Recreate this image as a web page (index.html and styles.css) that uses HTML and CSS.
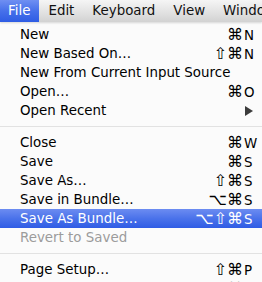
FILE: index.html
```html
<!DOCTYPE html>
<html lang="en">
<head>
    <meta charset="UTF-8">
    <title>File Menu</title>
    <link rel="stylesheet" href="styles.css">
</head>
<body>
    <div class="menubar">
        <span class="title active first">File</span>
        <span class="title">Edit</span>
        <span class="title">Keyboard</span>
        <span class="title">View</span>
        <span class="title">Window</span>
    </div>

    <ul class="menu">
        <li class="item"><span class="label">New</span><span class="keys"><span class="mods">⌘</span><span class="key">N</span></span></li>
        <li class="item"><span class="label">New Based On…</span><span class="keys"><span class="mods">⇧⌘</span><span class="key">N</span></span></li>
        <li class="item"><span class="label">New From Current Input Source</span></li>
        <li class="item"><span class="label">Open…</span><span class="keys"><span class="mods">⌘</span><span class="key">O</span></span></li>
        <li class="item"><span class="label">Open Recent</span><span class="submenu"></span></li>
        <li class="separator"></li>
        <li class="item"><span class="label">Close</span><span class="keys"><span class="mods">⌘</span><span class="key">W</span></span></li>
        <li class="item"><span class="label">Save</span><span class="keys"><span class="mods">⌘</span><span class="key">S</span></span></li>
        <li class="item"><span class="label">Save As…</span><span class="keys"><span class="mods">⇧⌘</span><span class="key">S</span></span></li>
        <li class="item"><span class="label">Save in Bundle…</span><span class="keys"><span class="mods">⌥⌘</span><span class="key">S</span></span></li>
        <li class="item selected"><span class="label">Save As Bundle…</span><span class="keys"><span class="mods">⌥⇧⌘</span><span class="key">S</span></span></li>
        <li class="item disabled"><span class="label">Revert to Saved</span></li>
        <li class="separator"></li>
        <li class="item"><span class="label">Page Setup…</span><span class="keys"><span class="mods">⇧⌘</span><span class="key">P</span></span></li>
        <li class="item"><span class="label">Print…</span><span class="keys"><span class="mods">⌘</span><span class="key">P</span></span></li>
    </ul>
</body>
</html>
```

FILE: styles.css
```css
/* General */
body {
    margin: 0;
    padding: 0;
    width: 262px;
    height: 282px;
    overflow: hidden;
    background: #fbfbfb;
    font-family: 'DejaVu Sans', 'Liberation Sans', sans-serif;
    font-size: 13.4px;
    color: #000;
}

/* Menu bar */
.menubar {
    display: flex;
    height: 22px;
    line-height: 22px;
    white-space: nowrap;
    background: linear-gradient(#f5f5f5, #e4e4e4 50%, #d2d2d2);
    box-shadow: 0 1px 2px rgba(0, 0, 0, 0.15);
    position: relative;
    z-index: 1;
}

.menubar .title {
    padding: 0 9px;
    color: #111;
}

.menubar .title.first {
    padding-left: 8px;
}

.menubar .title.active {
    color: #fff;
    background: linear-gradient(#6f8ff2, #4670ea 50%, #2e5ce4);
}

/* Dropdown */
.menu {
    list-style: none;
    margin: 0;
    padding: 3px 0 0;
}

.item {
    display: flex;
    align-items: center;
    height: 19px;
    padding: 0 6px 0 20px;
    white-space: nowrap;
}

.item .label {
    flex: 1;
}

.keys {
    display: flex;
    align-items: baseline;
}

.keys .mods {
    text-align: right;
    font-size: 16px;
    line-height: 19px;
}

.keys .key {
    width: 12px;
    padding-left: 1px;
}

.submenu {
    width: 0;
    height: 0;
    margin-right: 3px;
    border-top: 5px solid transparent;
    border-bottom: 5px solid transparent;
    border-left: 8px solid #3c3c3c;
}

.item.selected {
    color: #fff;
    background: linear-gradient(#6c8cf1, #4a72ea 50%, #2f5ce5);
}

.item.disabled {
    color: #9c9c9c;
}

.separator {
    height: 1px;
    margin: 6px 0;
    background: #e2e2e2;
}
```
